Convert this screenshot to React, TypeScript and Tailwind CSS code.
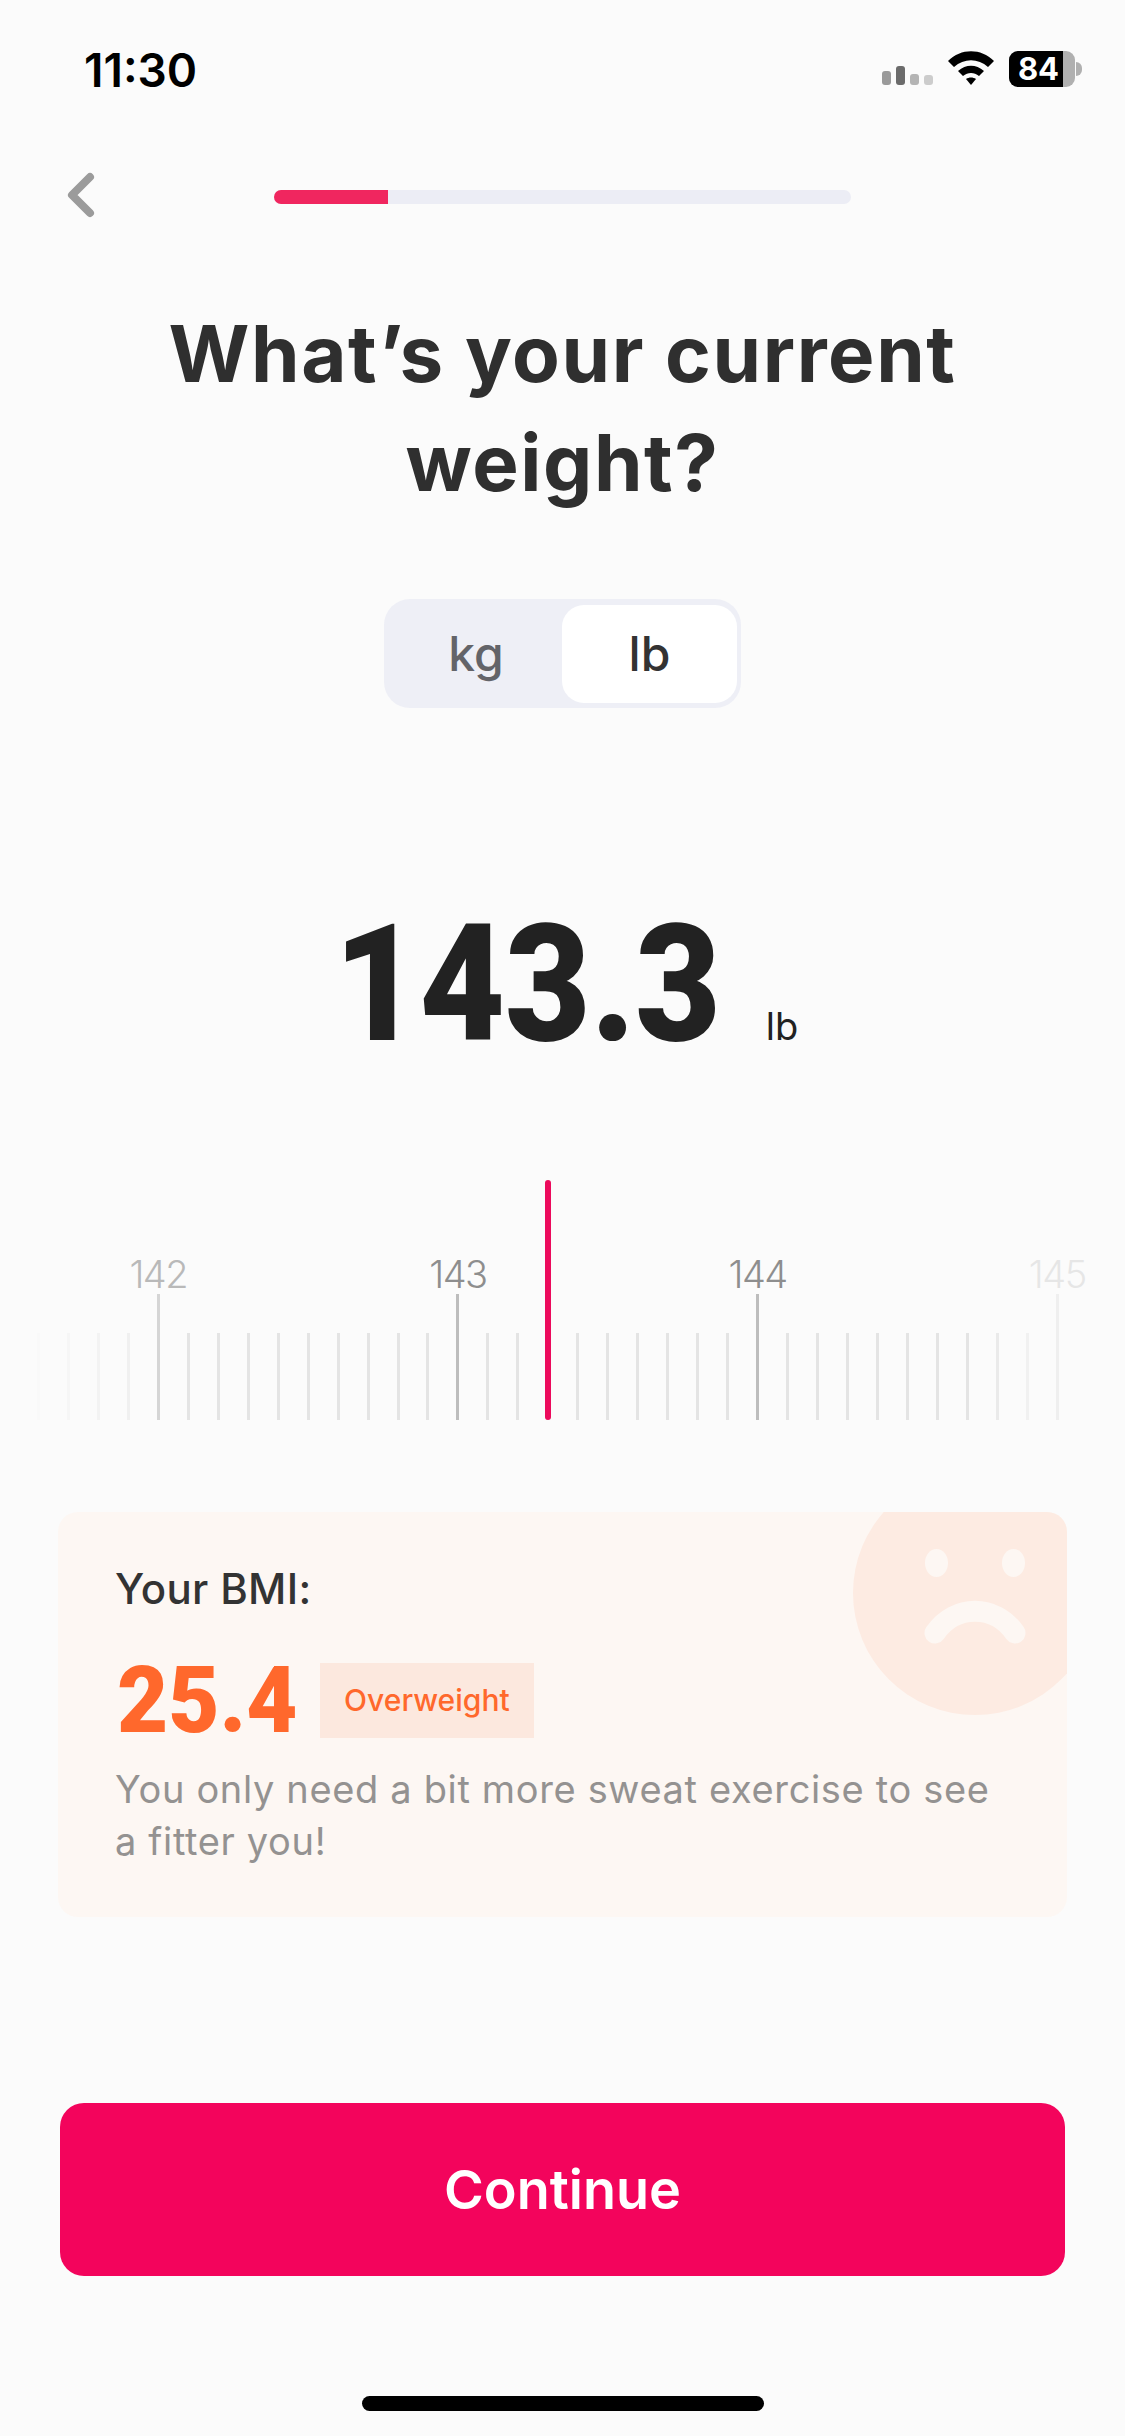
const FONT = { fontFamily: 'Inter, sans-serif' };
const NUMBER_FONT = { fontFamily: 'Roboto, sans-serif' };

// Ruler runs from 4 ticks before 142 up to 145, ten ticks per pound
const TICK_STEP = 29.98;
const TICKS = Array.from({ length: 35 }, (_, i) => ({
    value: 141.6 + i / 10,
    x: 38.4 + i * TICK_STEP,
}));

// Ticks and labels fade out towards both ends of the ruler
function tickFade(x: number) {
    if (x < 158) return 0.08 + (x - 38) * 0.00433;
    if (x < 188) return 0.6 + (x - 158) * 0.0133;
    return Math.max(0, Math.min(1, (1078 - x) / 110));
}

function StatusBar() {
    return (
        <div className="flex h-[167px] items-start justify-between pl-[84px] pr-[43px] pt-[45px]">
            <span className="text-[46px] leading-[50px] font-semibold text-black">11:30</span>
            <div className="flex items-start gap-[15px] pt-[6px]">
                <div className="flex h-[34px] items-end gap-[5px]">
                    <div className="h-[14px] w-[9px] rounded-[3px] bg-[#9a9a9a]" />
                    <div className="h-[19px] w-[9px] rounded-[3px] bg-[#6b6b6b]" />
                    <div className="h-[11px] w-[9px] rounded-[3px] bg-[#b4b4b4]" />
                    <div className="h-[10px] w-[9px] rounded-[3px] bg-[#cccccc]" />
                </div>
                <svg width="46" height="34" viewBox="0 0 46 34">
                    <path d="M0 10C13-3 33-3 46 10L40 16C30 7 16 7 6 16Z" fill="#000" />
                    <path d="M10 20C18 13 28 13 36 20L31 25C26 21 20 21 15 25Z" fill="#000" />
                    <path d="M18 28C21 26 25 26 28 28L23 34Z" fill="#000" />
                </svg>
                <div className="flex items-center">
                    <div className="flex h-[36px] w-[66px] rounded-[9px] bg-[#b0b0b0]">
                        <div className="flex h-full w-[54px] items-center justify-center rounded-l-[9px] bg-black pl-[5px] text-[31px] font-bold text-white">84</div>
                    </div>
                    <div className="ml-[1px] h-[14px] w-[6px] rounded-r-full bg-[#b0b0b0]" />
                </div>
            </div>
        </div>
    );
}

function Ruler() {
    return (
        <div className="relative mt-[122px] h-[240px]">
            <div className="absolute left-[545px] top-0 z-10 h-[240px] w-[6px] rounded-full bg-[#ec0a5c]" />
            <div className="flex h-full items-end pl-[23.4px]">
                {TICKS.map(({ value, x }) => {
                    const major = Math.abs(value - Math.round(value)) < 0.01;
                    return (
                        <div key={value.toFixed(1)} className="flex w-[29.98px] flex-col items-center justify-end" style={{ opacity: tickFade(x) }}>
                            {major && (
                                <span className="mb-[-3px] text-[38px] leading-[46px] font-light tracking-[-1.5px] text-[#8e8e8e]">
                                    {Math.round(value)}
                                </span>
                            )}
                            <div className={major ? 'h-[126px] w-[3px] bg-[#bdbdbd]' : 'h-[87px] w-[3px] bg-[#e4e4e4]'} />
                        </div>
                    );
                })}
            </div>
        </div>
    );
}

function BmiCard() {
    return (
        <div className="relative mx-[58px] mt-[92px] h-[405px] overflow-hidden rounded-[20px] bg-[#fdf7f3] pl-[57px] pt-[52px]">
            <svg className="absolute left-[795px] top-[-41px]" width="244" height="244" viewBox="0 0 244 244">
                <circle cx="122" cy="122" r="122" fill="#fdebe2" />
                <ellipse cx="83.5" cy="92" rx="11.5" ry="14" fill="#fdf7f3" />
                <ellipse cx="160.5" cy="92" rx="11.5" ry="14" fill="#fdf7f3" />
                <path d="M82 162C102 133 142 133 162 162" fill="none" stroke="#fdf7f3" strokeWidth="21" strokeLinecap="round" />
            </svg>
            <div className="relative">
                <div className="text-[42px] leading-[50px] font-medium tracking-[0.3px] text-[#333333]">Your BMI:</div>
                <div className="mt-[49px] flex items-end">
                    <span className="ml-[2px] origin-left scale-x-[0.95] text-[93px] leading-[75px] font-black text-[#ff682c]" style={NUMBER_FONT}>25.4</span>
                    <span className="ml-[13px] flex h-[75px] w-[214px] items-center justify-center bg-[#fce8de] text-[30px] font-medium text-[#ff682c]">Overweight</span>
                </div>
                <p className="mt-[25px] text-[38px] leading-[52px] tracking-[0.65px] text-[#949291]">
                    You only need a bit more sweat exercise to see<br />a fitter you!
                </p>
            </div>
        </div>
    );
}

export default function App() {
    return (
        <div className="flex h-[2436px] w-[1125px] flex-col overflow-hidden bg-[#fbfbfb]" style={FONT}>
            <StatusBar />

            <div className="flex h-[56px] items-center pl-[66px]">
                <svg width="30" height="46" viewBox="0 0 30 46">
                    <path d="M24 5L6 23L24 41" fill="none" stroke="#9b9b9b" strokeWidth="8" strokeLinecap="round" strokeLinejoin="round" />
                </svg>
                <div className="ml-[178px] mt-[4px] h-[14px] w-[577px] overflow-hidden rounded-full bg-[#ecedf5]">
                    <div className="h-full w-[114px] bg-[#f0265f]" />
                </div>
            </div>

            <h1 className="mt-[76px] text-center text-[78px] leading-[109px] font-bold tracking-[1.6px] text-[#2f2f2f]">
                What’s your current<br />weight?
            </h1>

            <div className="mx-auto mt-[82px] flex h-[109px] w-[357px] rounded-[26px] bg-[#eeeff6] pb-[5px] pl-[6px] pr-[4px] pt-[6px]">
                <div className="flex flex-1 items-center justify-center text-[48px] font-medium text-[#636469]">kg</div>
                <div className="flex w-[175px] items-center justify-center rounded-[22px] bg-white text-[48px] font-medium text-[#333333]">lb</div>
            </div>

            <div className="mt-[202px] flex h-[148px] items-baseline pl-[334px]">
                <span className="origin-left scale-x-90 text-[164px] leading-[148px] font-black text-[#222222]" style={NUMBER_FONT}>143.3</span>
                <span className="ml-[2px] text-[38px] leading-[40px] text-[#222222]">lb</span>
            </div>

            <Ruler />
            <BmiCard />

            <button className="mx-[60px] mt-[186px] flex h-[173px] items-center justify-center rounded-[24px] bg-[#f3045c] text-[54px] font-semibold text-white">
                Continue
            </button>

            <div className="mx-auto mt-[120px] h-[15px] w-[402px] rounded-full bg-black" />
        </div>
    );
}
